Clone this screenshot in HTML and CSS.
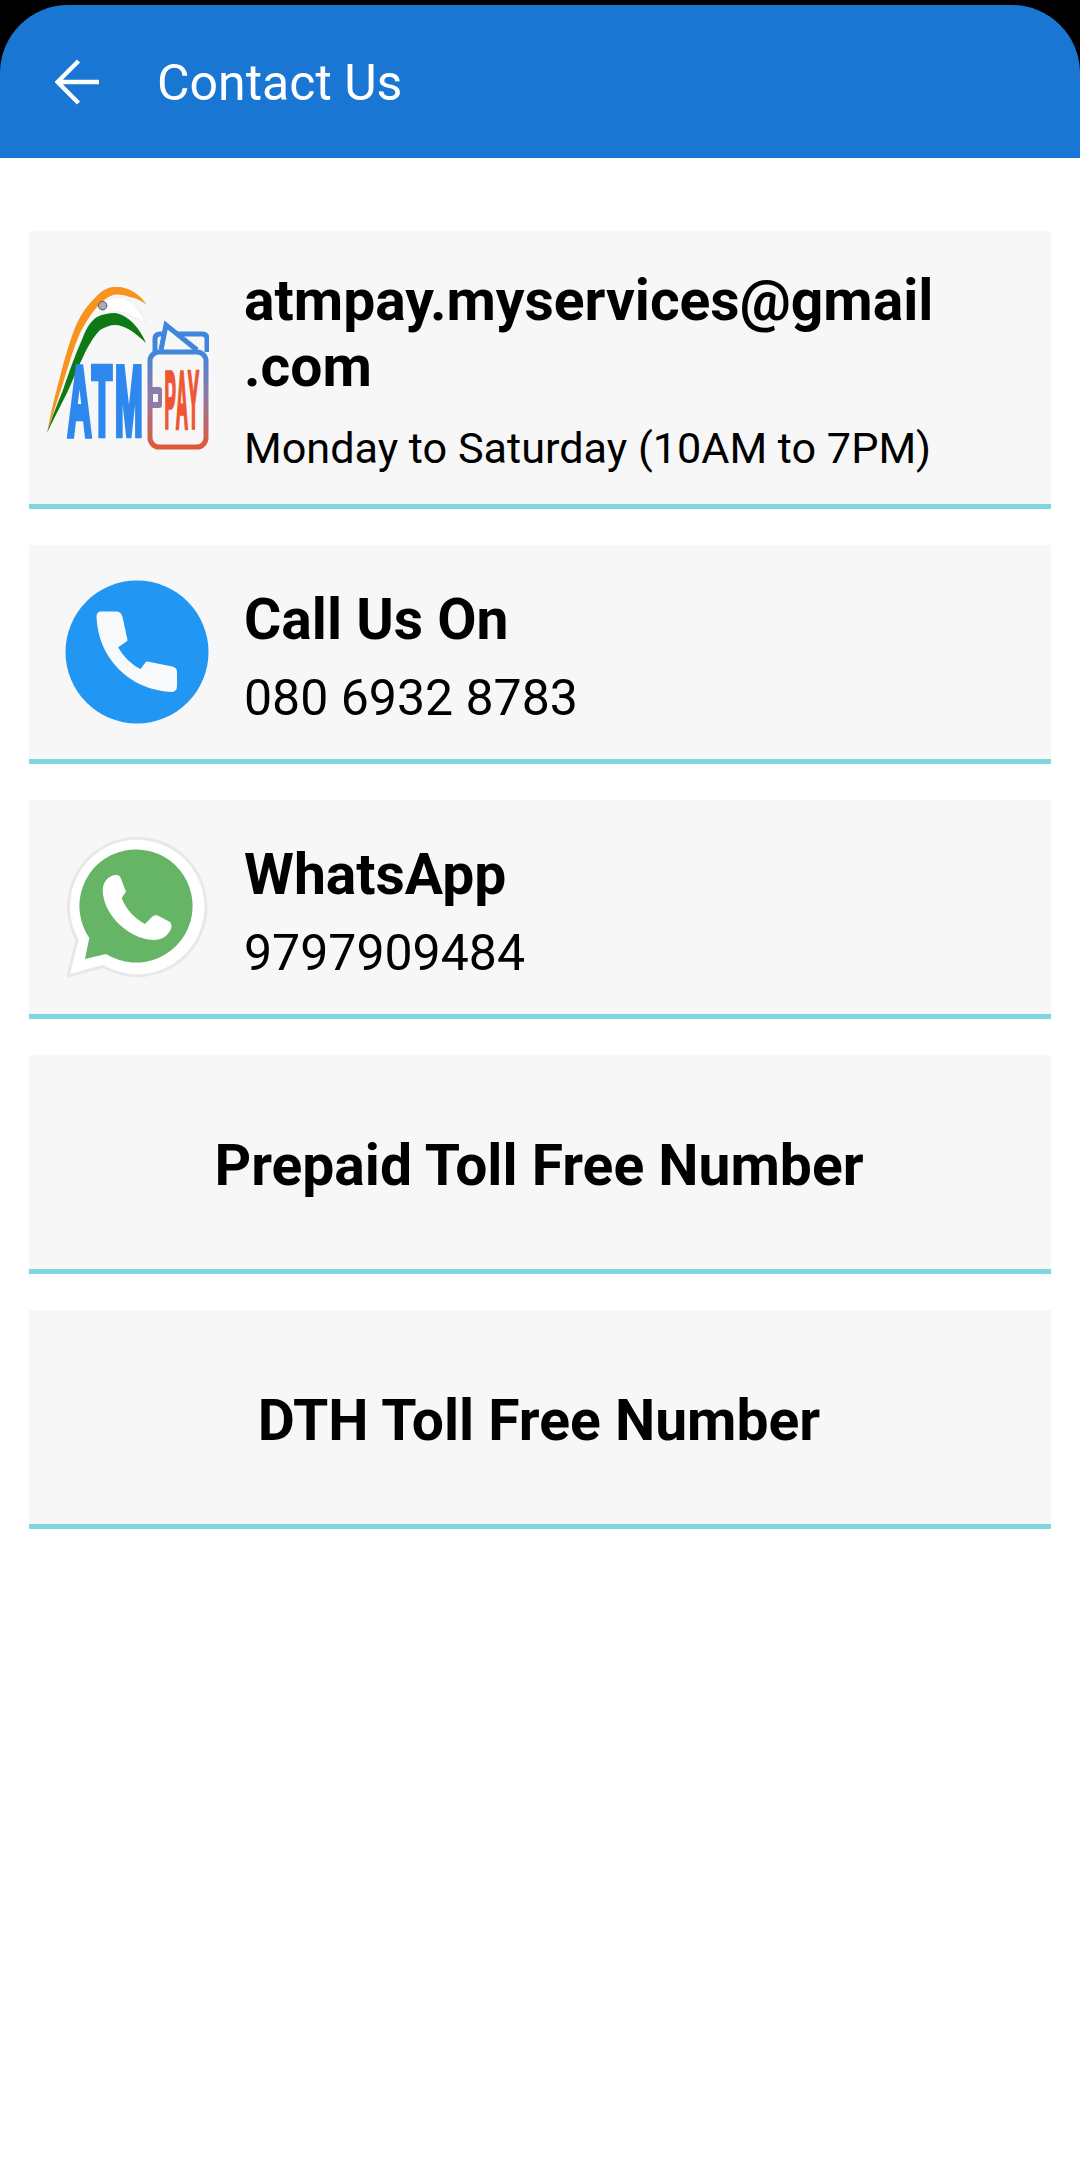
FILE: index.html
```html
<!DOCTYPE html>
<html lang="en">
<head>
    <meta charset="UTF-8">
    <meta name="viewport" content="width=device-width, initial-scale=1.0">
    <title>Contact Us</title>
    <link rel="stylesheet" href="styles.css">
</head>
<body>
    <div class="top-wrap">
        <header class="app-bar">
            <svg class="back-icon" viewBox="0 0 46 46" aria-hidden="true">
                <path d="M44 23H4M23.500 2 2.500 23l21 21" fill="none" stroke="#fff" stroke-width="4.400"/>
            </svg>
            <h1>Contact Us</h1>
        </header>
    </div>

    <main class="contact-list">
        <div class="card card-mail">
            <svg class="card-icon" viewBox="0 0 162 174" aria-hidden="true">
                <defs>
                    <linearGradient id="walletStroke" x1="0" y1="0" x2="0" y2="1">
                        <stop offset="0" stop-color="#3f86dc"/>
                        <stop offset="0.45" stop-color="#8f7ba8"/>
                        <stop offset="1" stop-color="#e2583a"/>
                    </linearGradient>
                </defs>
                <path d="M0 146C4 125 8 108 13 90 18 70 24 50 30 36 35 26 40 19 46 13 52 6 58 1 66 0 73 -1 78 1 83 3 90 6 95 11 100 18 95 14 89 11 83 10 77 8 72 7 66 8 60 10 55 14 50 20 44 27 38 36 33 46 26 62 21 80 16 96 10 115 5 130 0 146Z" fill="#f7931e"/>
                <path d="M53 17C60 11 68 9 76 11 84 13 93 23 99 36 94 32 90 32 86 30 82 27 77 25 73 25 68 24 64 25 58 27Z" fill="#fff" stroke="#e4e4e4" stroke-width=".6"/>
                <path d="M0 146C5 130 10 118 16 103 22 85 29 66 36 50 40 40 44 34 50 30 56 27 62 26 68 26 75 27 81 31 86 36 92 42 96 49 99 56 94 51 89 47 83 43 78 40 73 38 68 38 63 38 58 40 53 43 47 49 41 59 36 70 30 82 25 95 20 106 13 120 6 133 0 146Z" fill="#0e7a16"/>
                <circle cx="55.700" cy="18.700" r="4.200" fill="#a4afbb" stroke="#444" stroke-width=".9"/>
                <text class="logo-atm" transform="translate(20.500 147.500) scale(.34 1)">ATM</text>
                <path d="M108 65V52Q108 47 113 47H155Q160 47 160 52V65" fill="none" stroke="#3f86dc" stroke-width="5"/>
                <path d="M114 63 119 38 150 63" fill="#f7f7f7" stroke="#3f86dc" stroke-width="5"/>
                <rect x="103" y="65" width="56" height="95" rx="9" fill="#f7f7f7" stroke="url(#walletStroke)" stroke-width="5"/>
                <rect x="102" y="100" width="13" height="21" rx="3" fill="#8f7ba8"/>
                <rect x="106" y="107" width="5" height="8" fill="#f7f7f7"/>
                <text class="logo-pay" transform="translate(117.500 140.500) scale(.208 1)">PAY</text>
            </svg>
            <div class="card-text">
                <div class="card-title">atmpay.myservices@gmail<br>.com</div>
                <div class="card-sub card-hours">Monday to Saturday (10AM to 7PM)</div>
            </div>
        </div>

        <div class="card">
            <svg class="card-icon" viewBox="0 0 144 144" aria-hidden="true">
                <circle cx="72" cy="72" r="71.500" fill="#2196f3"/>
                <path d="M36 33H51Q55 33 56 37L61 60 51 67C58 79 65 86 76 91L82 83 107 88Q110.500 89 110.500 92V106Q110.500 110.500 106 110.500C65 108 35 78 33 37Q33 33 36 33Z" fill="#f8f9fa" stroke="#f8f9fa" stroke-width="3" stroke-linejoin="round"/>
            </svg>
            <div class="card-text">
                <div class="card-title">Call Us On</div>
                <div class="card-sub">080 6932 8783</div>
            </div>
        </div>

        <div class="card">
            <svg class="card-icon" viewBox="0 0 144 144" aria-hidden="true">
                <path d="M3 141 12 105A68.700 68.700 0 1 1 38 131.500Z" fill="#fff" stroke="#e8e8e8" stroke-width="3" stroke-linejoin="round"/>
                <path d="M20 124 24.300 103A56.600 56.600 0 1 1 41 119Z" fill="#66b466"/>
                <path d="M37.700 55C38 47 43 41 50 40 53 39.500 55 41 55.500 42.500L61 56.700 56.700 63C60 73 70 84 80 89L88 81 91.700 80 105 87Q107 89 106.500 92C104 101 97 105 88 105 64 104 38 80 37.700 55Z" fill="#fff"/>
            </svg>
            <div class="card-text">
                <div class="card-title">WhatsApp</div>
                <div class="card-sub">9797909484</div>
            </div>
        </div>

        <div class="card card-center">
            <div class="card-text">
                <div class="card-title">Prepaid Toll Free Number</div>
            </div>
        </div>

        <div class="card card-center">
            <div class="card-text">
                <div class="card-title">DTH Toll Free Number</div>
            </div>
        </div>
    </main>
</body>
</html>
```

FILE: styles.css
```css
/* General Styles */
html, body {
    height: 100%;
}

body {
    margin: 0;
    background: #fff;
    color: #000;
    font-family: Roboto, "Noto Sans", sans-serif;
}

/* App Bar */
.top-wrap {
    background: #000;
    padding-top: 5px;
}

.app-bar {
    display: flex;
    align-items: center;
    height: 153px;
    box-sizing: border-box;
    padding-left: 55px;
    background: #1976d2;
    border-radius: 68px 68px 0 0;
}

.back-icon {
    width: 46px;
    height: 46px;
    margin-right: 57px;
}

.app-bar h1 {
    margin: 2px 0 0 -1px;
    color: #fff;
    font-size: 50px;
    font-weight: 400;
}

/* Contact Cards */
.contact-list {
    display: flex;
    flex-direction: column;
    gap: 36px;
    padding: 73px 29px 0;
}

.card {
    display: flex;
    align-items: center;
    gap: 35px;
    box-sizing: border-box;
    height: 219px;
    padding-left: 36px;
    background: #f7f7f7;
    border-bottom: 5px solid #7ed6e1;
}

.card-mail {
    height: 278px;
    padding-left: 18px;
}

.card-center {
    justify-content: center;
    padding: 0 2px 0 0;
}

.card-icon {
    flex: none;
    width: 144px;
    height: 144px;
}

.card-mail .card-icon {
    width: 162px;
    height: 174px;
    margin-bottom: -12px;
}

.card-text {
    padding-top: 8px;
}

.card-mail .card-text {
    padding-top: 10px;
}

.card-title {
    font-size: 57px;
    font-weight: 700;
    line-height: 66px;
}

.card-sub {
    margin-top: 17px;
    font-size: 50px;
    line-height: 56px;
}

.card-hours {
    margin-top: 21px;
    font-size: 43.200px;
}

/* Logo */
.logo-atm {
    fill: #2e88ee;
    stroke: #2e88ee;
    stroke-width: 5;
    vector-effect: non-scaling-stroke;
    font-family: "Liberation Sans", sans-serif;
    font-size: 98px;
    font-weight: 700;
    letter-spacing: 8px;
}

.logo-pay {
    fill: #ee5530;
    stroke: #ee5530;
    stroke-width: 2.500;
    vector-effect: non-scaling-stroke;
    font-family: "Liberation Sans", sans-serif;
    font-size: 82px;
    font-weight: 700;
    letter-spacing: 6px;
}
```
